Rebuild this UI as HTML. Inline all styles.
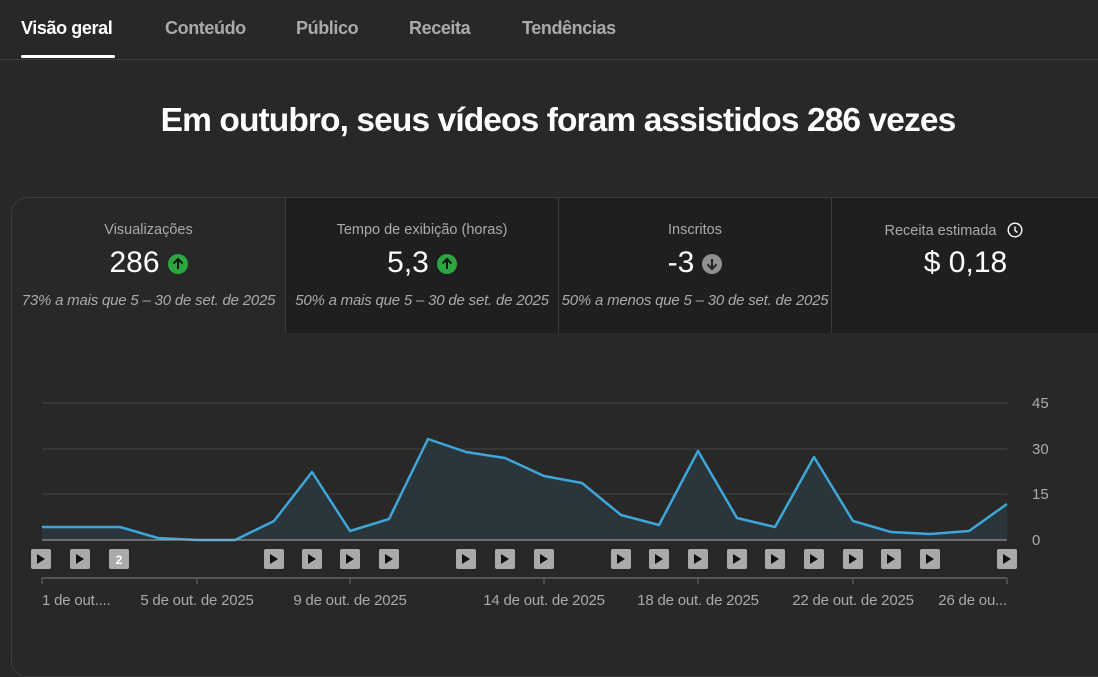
<!DOCTYPE html>
<html><head><meta charset="utf-8"><style>
*{margin:0;padding:0;box-sizing:border-box}
body{width:1098px;height:650px;background:#282828;font-family:"Liberation Sans",sans-serif;color:#fff;position:relative;overflow:hidden}
.tabs{position:absolute;top:0;left:0;right:0;height:60px;border-bottom:1px solid #3c3c3c}
.tab{position:absolute;top:18px;font-size:18px;font-weight:bold;color:#aaa;letter-spacing:-0.4px}
.tab.on{color:#fff}
.ul{position:absolute;left:21px;top:55px;width:94px;height:3px;background:#fff;border-radius:2px}
h1{position:absolute;top:102px;left:18px;width:1080px;text-align:center;font-size:33.5px;font-weight:bold;letter-spacing:-0.9px}
.card{position:absolute;left:11px;top:197px;width:1110px;height:480px;border:1px solid #3c3c3c;border-radius:16px;overflow:hidden}
.tile{position:absolute;top:0;height:135px;background:#1f1f1f;text-align:center}
.tile .l{position:absolute;top:24px;left:0;right:0;font-size:14.5px;color:#aaa}
.tile .v{position:absolute;top:48px;left:0;right:0;height:34px;font-size:30px;color:#fff;display:flex;justify-content:center;align-items:center}
.tile .s{position:absolute;top:94px;left:0;right:0;font-size:15px;color:#aaa;font-style:italic;letter-spacing:-0.2px}
.ic{display:inline-block;width:20px;height:20px;border-radius:50%;margin-left:8px;margin-top:2px}
.ic svg{display:block}
</style></head><body>
<div class="tabs">
<div class="tab on" style="left:21px">Visão geral</div>
<div class="tab" style="left:165px">Conteúdo</div>
<div class="tab" style="left:296px">Público</div>
<div class="tab" style="left:409px">Receita</div>
<div class="tab" style="left:522px">Tendências</div>
<div class="ul"></div>
</div>
<h1>Em outubro, seus vídeos foram assistidos 286 vezes</h1>
<div class="card">
<div class="tile" style="left:0;width:273px;background:#282828"><div class="l">Visualizações</div><div class="v">286<span class="ic" style="background:#2ba640"><svg width="20" height="20" viewBox="0 0 20 20"><path d="M10 15V5M5.5 9.5L10 5l4.5 4.5" stroke="#111" stroke-width="2" fill="none"/></svg></span></div><div class="s">73% a mais que 5 – 30 de set. de 2025</div></div>
<div class="tile" style="left:273px;width:273px;border-left:1px solid #3c3c3c"><div class="l">Tempo de exibição (horas)</div><div class="v">5,3<span class="ic" style="background:#2ba640"><svg width="20" height="20" viewBox="0 0 20 20"><path d="M10 15V5M5.5 9.5L10 5l4.5 4.5" stroke="#111" stroke-width="2" fill="none"/></svg></span></div><div class="s">50% a mais que 5 – 30 de set. de 2025</div></div>
<div class="tile" style="left:546px;width:273px;border-left:1px solid #3c3c3c"><div class="l">Inscritos</div><div class="v">-3<span class="ic" style="background:#909090"><svg width="20" height="20" viewBox="0 0 20 20"><path d="M10 5v10M5.5 10.5L10 15l4.5-4.5" stroke="#222" stroke-width="2" fill="none"/></svg></span></div><div class="s">50% a menos que 5 – 30 de set. de 2025</div></div>
<div class="tile" style="left:819px;width:300px;border-left:1px solid #3c3c3c"><div class="l" style="left:-12px;right:auto;width:267px">Receita estimada <svg width="16" height="16" viewBox="0 0 16 16" style="vertical-align:-3px;margin-left:6px"><circle cx="8" cy="8" r="6.8" stroke="#fff" stroke-width="1.4" fill="none"/><path d="M8 4.5V8.5l2.5 2" stroke="#fff" stroke-width="1.4" fill="none"/></svg></div><div class="v" style="right:auto;width:267px">$ 0,18</div></div>
</div>
<svg style="position:absolute;left:0;top:0" width="1098" height="650">
<g stroke="#3a3a3a" stroke-width="1.5"><line x1="42" y1="403" x2="1007" y2="403"/><line x1="42" y1="449" x2="1007" y2="449"/><line x1="42" y1="494" x2="1007" y2="494"/></g>
<polygon fill="#2b363c" points="42,540 42,527 81,527 120,527 158,538 197,540 235,540 274,521 312,472 350,531 389,519 428,439 466,452 505,458 544,476 582,483 621,515 659,525 698,451 737,518 775,527 814,457 853,521 891,532 930,534 969,531 1007,504 1007,540"/>
<polyline fill="none" stroke="#3ea6d8" stroke-width="2.5" stroke-linejoin="round" points="42,527 81,527 120,527 158,538 197,540 235,540 274,521 312,472 350,531 389,519 428,439 466,452 505,458 544,476 582,483 621,515 659,525 698,451 737,518 775,527 814,457 853,521 891,532 930,534 969,531 1007,504"/>
<line x1="42" y1="540" x2="1007" y2="540" stroke="#aaa" stroke-width="1"/>
<g fill="#aaa" font-size="15" font-family="Liberation Sans,sans-serif"><text x="1032" y="408">45</text><text x="1032" y="454">30</text><text x="1032" y="499">15</text><text x="1032" y="545">0</text></g>
<g>
<g transform="translate(41,559)"><rect x="-10" y="-10" width="20" height="20" rx="2" fill="#aaa"/><path d="M-4-5L4 0-4 5z" fill="#111"/></g>
<g transform="translate(80,559)"><rect x="-10" y="-10" width="20" height="20" rx="2" fill="#aaa"/><path d="M-4-5L4 0-4 5z" fill="#111"/></g>
<g transform="translate(119,559)"><rect x="-10" y="-10" width="20" height="20" rx="2" fill="#aaa"/><text x="0" y="5" text-anchor="middle" font-size="12" font-weight="bold" fill="#fff" font-family="Liberation Sans,sans-serif">2</text></g>
<g transform="translate(274,559)"><rect x="-10" y="-10" width="20" height="20" rx="2" fill="#aaa"/><path d="M-4-5L4 0-4 5z" fill="#111"/></g>
<g transform="translate(312,559)"><rect x="-10" y="-10" width="20" height="20" rx="2" fill="#aaa"/><path d="M-4-5L4 0-4 5z" fill="#111"/></g>
<g transform="translate(350,559)"><rect x="-10" y="-10" width="20" height="20" rx="2" fill="#aaa"/><path d="M-4-5L4 0-4 5z" fill="#111"/></g>
<g transform="translate(389,559)"><rect x="-10" y="-10" width="20" height="20" rx="2" fill="#aaa"/><path d="M-4-5L4 0-4 5z" fill="#111"/></g>
<g transform="translate(466,559)"><rect x="-10" y="-10" width="20" height="20" rx="2" fill="#aaa"/><path d="M-4-5L4 0-4 5z" fill="#111"/></g>
<g transform="translate(505,559)"><rect x="-10" y="-10" width="20" height="20" rx="2" fill="#aaa"/><path d="M-4-5L4 0-4 5z" fill="#111"/></g>
<g transform="translate(544,559)"><rect x="-10" y="-10" width="20" height="20" rx="2" fill="#aaa"/><path d="M-4-5L4 0-4 5z" fill="#111"/></g>
<g transform="translate(621,559)"><rect x="-10" y="-10" width="20" height="20" rx="2" fill="#aaa"/><path d="M-4-5L4 0-4 5z" fill="#111"/></g>
<g transform="translate(659,559)"><rect x="-10" y="-10" width="20" height="20" rx="2" fill="#aaa"/><path d="M-4-5L4 0-4 5z" fill="#111"/></g>
<g transform="translate(698,559)"><rect x="-10" y="-10" width="20" height="20" rx="2" fill="#aaa"/><path d="M-4-5L4 0-4 5z" fill="#111"/></g>
<g transform="translate(737,559)"><rect x="-10" y="-10" width="20" height="20" rx="2" fill="#aaa"/><path d="M-4-5L4 0-4 5z" fill="#111"/></g>
<g transform="translate(775,559)"><rect x="-10" y="-10" width="20" height="20" rx="2" fill="#aaa"/><path d="M-4-5L4 0-4 5z" fill="#111"/></g>
<g transform="translate(814,559)"><rect x="-10" y="-10" width="20" height="20" rx="2" fill="#aaa"/><path d="M-4-5L4 0-4 5z" fill="#111"/></g>
<g transform="translate(853,559)"><rect x="-10" y="-10" width="20" height="20" rx="2" fill="#aaa"/><path d="M-4-5L4 0-4 5z" fill="#111"/></g>
<g transform="translate(891,559)"><rect x="-10" y="-10" width="20" height="20" rx="2" fill="#aaa"/><path d="M-4-5L4 0-4 5z" fill="#111"/></g>
<g transform="translate(930,559)"><rect x="-10" y="-10" width="20" height="20" rx="2" fill="#aaa"/><path d="M-4-5L4 0-4 5z" fill="#111"/></g>
<g transform="translate(1007,559)"><rect x="-10" y="-10" width="20" height="20" rx="2" fill="#aaa"/><path d="M-4-5L4 0-4 5z" fill="#111"/></g>
</g>
<line x1="42" y1="578" x2="1007" y2="578" stroke="#555" stroke-width="2"/>
<g stroke="#555" stroke-width="1.5"><line x1="42" y1="578" x2="42" y2="584"/><line x1="197" y1="578" x2="197" y2="584"/><line x1="350" y1="578" x2="350" y2="584"/><line x1="544" y1="578" x2="544" y2="584"/><line x1="698" y1="578" x2="698" y2="584"/><line x1="853" y1="578" x2="853" y2="584"/><line x1="1007" y1="578" x2="1007" y2="584"/></g>
<g fill="#aaa" font-size="15" font-family="Liberation Sans,sans-serif" letter-spacing="-0.2"><text x="42" y="605">1 de out....</text><text x="197" y="605" text-anchor="middle">5 de out. de 2025</text><text x="350" y="605" text-anchor="middle">9 de out. de 2025</text><text x="544" y="605" text-anchor="middle">14 de out. de 2025</text><text x="698" y="605" text-anchor="middle">18 de out. de 2025</text><text x="853" y="605" text-anchor="middle">22 de out. de 2025</text><text x="1007" y="605" text-anchor="end">26 de ou...</text></g>
</svg>
</body></html>
